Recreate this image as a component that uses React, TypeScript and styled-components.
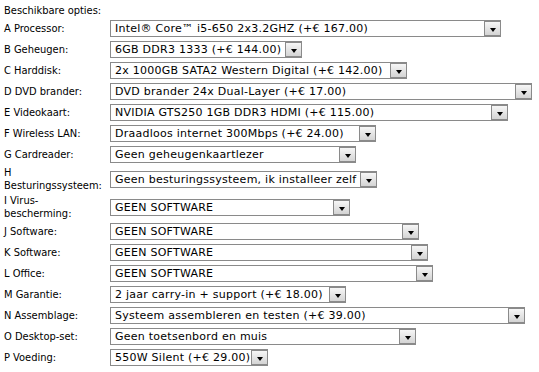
import styled, { createGlobalStyle } from "styled-components";

type Option = {
    label: string;
    value: string;
    width: number;
};

const options: Option[] = [
    {label: "A Processor:", value: "Intel® Core™ i5-650 2x3.2GHZ (+€ 167.00)", width: 391},
    {label: "B Geheugen:", value: "6GB DDR3 1333 (+€ 144.00)", width: 192},
    {label: "C Harddisk:", value: "2x 1000GB SATA2 Western Digital (+€ 142.00)", width: 297},
    {label: "D DVD brander:", value: "DVD brander 24x Dual-Layer (+€ 17.00)", width: 422},
    {label: "E Videokaart:", value: "NVIDIA GTS250 1GB DDR3 HDMI (+€ 115.00)", width: 398},
    {label: "F Wireless LAN:", value: "Draadloos internet 300Mbps (+€ 24.00)", width: 266},
    {label: "G Cardreader:", value: "Geen geheugenkaartlezer", width: 246},
    {label: "H\nBesturingssysteem:", value: "Geen besturingssysteem, ik installeer zelf", width: 267},
    {label: "I Virus-\nbescherming:", value: "GEEN SOFTWARE", width: 240},
    {label: "J Software:", value: "GEEN SOFTWARE", width: 309},
    {label: "K Software:", value: "GEEN SOFTWARE", width: 318},
    {label: "L Office:", value: "GEEN SOFTWARE", width: 323},
    {label: "M Garantie:", value: "2 jaar carry-in + support (+€ 18.00)", width: 236},
    {label: "N Assemblage:", value: "Systeem assembleren en testen (+€ 39.00)", width: 415},
    {label: "O Desktop-set:", value: "Geen toetsenbord en muis", width: 306},
    {label: "P Voeding:", value: "550W Silent (+€ 29.00)", width: 158},
];

const GlobalStyle = createGlobalStyle`
  body {
    margin: 0;
    background: #ffffff;
    color: #000000;
    font-family: "DejaVu Sans Condensed", "Liberation Sans", sans-serif;
  }
`;

const Container = styled.div`
  padding: 3px 0 0 4px;
`;

const Title = styled.div`
  font-size: 11px;
  line-height: 15px;
`;

const Row = styled.div`
  display: grid;
  grid-template-columns: 106px auto;
  align-items: center;
  min-height: 21px;
  padding: 1px 0;
  box-sizing: border-box;
`;

const Label = styled.div`
  font-size: 11px;
  line-height: 13px;
  white-space: pre-line;
`;

const Select = styled.div<{ $width: number }>`
  display: flex;
  width: ${p => p.$width}px;
  height: 17px;
  box-sizing: border-box;
  border: 1px solid #8a8a8a;
  background: #ffffff;
`;

const Value = styled.span`
  flex: 1;
  padding: 0 4px;
  font-family: "DejaVu Sans", Verdana, sans-serif;
  font-size: 11px;
  letter-spacing: 0.25px;
  line-height: 15px;
  white-space: nowrap;
  overflow: hidden;
`;

const Arrow = styled.span`
  width: 16px;
  box-sizing: border-box;
  border: 1px solid #8a8a8a;
  border-right: 0;
  background: linear-gradient(#f6f6f6, #d4d4d4);
  display: flex;
  align-items: center;
  justify-content: center;
  padding-top: 3px;

  &::after {
    content: "";
    border-left: 3.5px solid transparent;
    border-right: 3.5px solid transparent;
    border-top: 4px solid #000000;
  }
`;

export default function App() {
    return <>
        <GlobalStyle/>
        <Container>
            <Title>Beschikbare opties:</Title>
            {options.map(option => (
                <Row key={option.label}>
                    <Label>{option.label}</Label>
                    <Select $width={option.width}>
                        <Value>{option.value}</Value>
                        <Arrow/>
                    </Select>
                </Row>
            ))}
        </Container>
    </>
}
